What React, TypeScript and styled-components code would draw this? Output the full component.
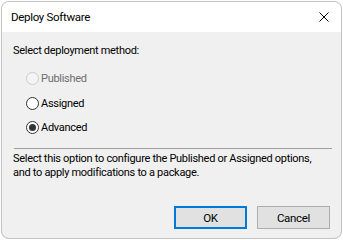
import styled, { createGlobalStyle } from "styled-components";

const GlobalStyle = createGlobalStyle`
    body {
        margin: 0;
        background: #ffffff;
        font-family: "Segoe UI", Roboto, "Liberation Sans", sans-serif;
        font-size: 11px;
        letter-spacing: -0.3px;
    }
`;

const Window = styled.div`
    box-sizing: border-box;
    margin: 1px 0 0 1px;
    width: 341px;
    height: 238px;
    border: 1px solid #c4c4c4;
    border-radius: 8px;
    overflow: hidden;
    display: flex;
    flex-direction: column;
    background: #f0f0f0;
    box-shadow: 0 0 1px rgba(0, 0, 0, 0.15);
`;

const TitleBar = styled.div`
    height: 30px;
    flex: none;
    background: #ffffff;
    display: flex;
    align-items: center;
    justify-content: space-between;
    padding: 0 9px 0 9px;
    color: #000;
    font-size: 11.5px;
`;

const CloseButton = styled.div`
    width: 30px;
    height: 30px;
    display: flex;
    align-items: center;
    justify-content: center;
    margin-right: -7px;
`;

const Body = styled.div`
    flex: 1;
    display: flex;
    flex-direction: column;
    padding: 11px 11px 0 11px;
    color: #000;
`;

const Label = styled.div`
    line-height: 16px;
`;

const Options = styled.div`
    display: flex;
    flex-direction: column;
    gap: 7.5px;
    padding: 11px 0 0 13px;
`;

const Option = styled.label<{ $disabled?: boolean }>`
    display: flex;
    align-items: center;
    gap: 2px;
    height: 17px;
    color: ${(p) => (p.$disabled ? "#6d6d6d" : "#000")};
`;

const Radio = styled.span<{ $checked?: boolean; $disabled?: boolean }>`
    box-sizing: border-box;
    width: 13px;
    height: 13px;
    border-radius: 50%;
    border: 1px solid ${(p) => (p.$disabled ? "#cccccc" : "#333333")};
    background: ${(p) => (p.$disabled ? "#f4f4f4" : "#ffffff")};
    display: flex;
    align-items: center;
    justify-content: center;

    &::after {
        content: "";
        width: 7px;
        height: 7px;
        border-radius: 50%;
        background: #333333;
        display: ${(p) => (p.$checked ? "block" : "none")};
    }
`;

const Separator = styled.div`
    height: 1px;
    background: #a0a0a0;
    margin: 12px 0 0 1px;
    width: 318px;
`;

const Description = styled.div`
    margin-top: 3px;
    line-height: 14px;
    white-space: nowrap;
`;

const Footer = styled.div`
    margin-top: auto;
    display: flex;
    justify-content: flex-end;
    gap: 10px;
    padding: 0 0 9px 0;
`;

const Button = styled.div<{ $primary?: boolean }>`
    box-sizing: border-box;
    width: 73px;
    height: 23px;
    background: #e1e1e1;
    border: ${(p) => (p.$primary ? "2px solid #0078d7" : "1px solid #adadad")};
    display: flex;
    align-items: center;
    justify-content: center;
    color: #000;
    font-size: 11.5px;
`;

export default function App() {
    return (
        <>
            <GlobalStyle />
            <Window>
                <TitleBar>
                    <span>Deploy Software</span>
                    <CloseButton>
                        <svg width="10" height="10" viewBox="0 0 10 10">
                            <path d="M0.5 0.5 L9.5 9.5 M9.5 0.5 L0.5 9.5" stroke="#000" strokeWidth="1" />
                        </svg>
                    </CloseButton>
                </TitleBar>
                <Body>
                    <Label>Select deployment method:</Label>
                    <Options>
                        <Option $disabled>
                            <Radio $disabled />
                            Published
                        </Option>
                        <Option>
                            <Radio />
                            Assigned
                        </Option>
                        <Option>
                            <Radio $checked />
                            Advanced
                        </Option>
                    </Options>
                    <Separator />
                    <Description>
                        Select this option to configure the Published or Assigned options,
                        <br />
                        and to apply modifications to a package.
                    </Description>
                    <Footer>
                        <Button $primary>OK</Button>
                        <Button>Cancel</Button>
                    </Footer>
                </Body>
            </Window>
        </>
    );
}
